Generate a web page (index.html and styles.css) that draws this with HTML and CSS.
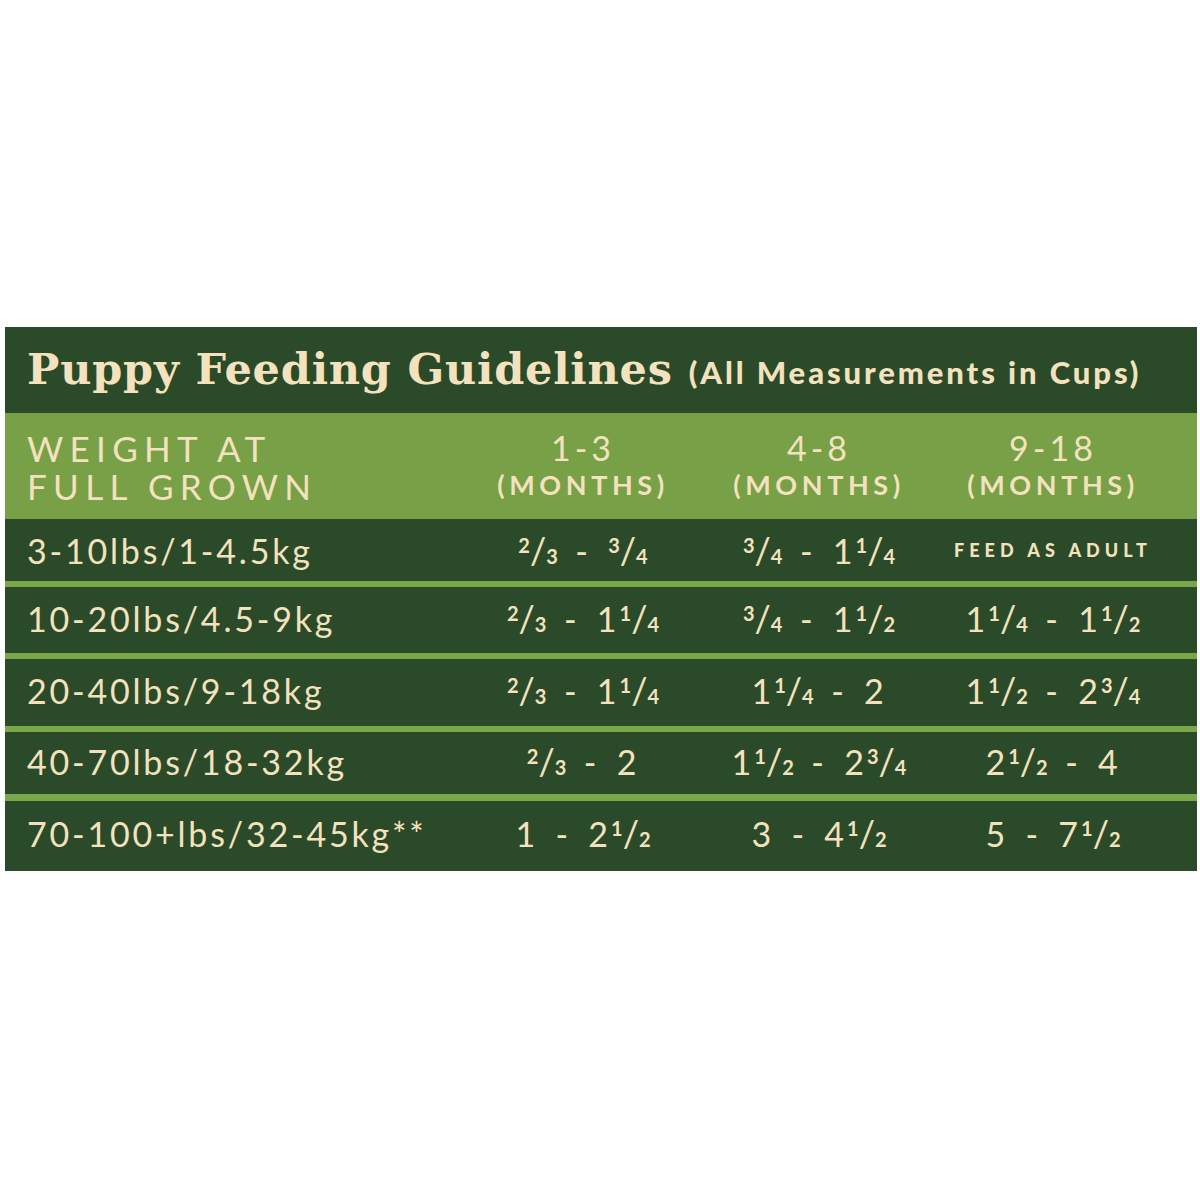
FILE: index.html
```html
<!DOCTYPE html>
<html>
<head>
<meta charset="utf-8">
<link rel="stylesheet" href="styles.css">
</head>
<body>
<div class="page">
  <div class="card">
    <div class="title">
      <span class="title-main">Puppy Feeding Guidelines</span>
      <span class="title-sub">(All Measurements in Cups)</span>
    </div>
    <div class="row head">
      <div class="c1">WEIGHT AT<br>FULL GROWN</div>
      <div class="cc"><span class="range">1-3</span><span class="months">(MONTHS)</span></div>
      <div class="cc"><span class="range">4-8</span><span class="months">(MONTHS)</span></div>
      <div class="cc"><span class="range">9-18</span><span class="months">(MONTHS)</span></div>
    </div>
    <div class="row data r1">
      <div class="c1">3-10lbs/1-4.5kg</div>
      <div class="cc"><span class="fr"><span class="n">2</span><span class="s">/</span><span class="d">3</span></span> - <span class="fr"><span class="n">3</span><span class="s">/</span><span class="d">4</span></span></div>
      <div class="cc"><span class="fr"><span class="n">3</span><span class="s">/</span><span class="d">4</span></span> - <span class="w">1</span><span class="fr"><span class="n">1</span><span class="s">/</span><span class="d">4</span></span></div>
      <div class="cc adult">FEED AS ADULT</div>
    </div>
    <div class="row data r2">
      <div class="c1">10-20lbs/4.5-9kg</div>
      <div class="cc"><span class="fr"><span class="n">2</span><span class="s">/</span><span class="d">3</span></span> - <span class="w">1</span><span class="fr"><span class="n">1</span><span class="s">/</span><span class="d">4</span></span></div>
      <div class="cc"><span class="fr"><span class="n">3</span><span class="s">/</span><span class="d">4</span></span> - <span class="w">1</span><span class="fr"><span class="n">1</span><span class="s">/</span><span class="d">2</span></span></div>
      <div class="cc"><span class="w">1</span><span class="fr"><span class="n">1</span><span class="s">/</span><span class="d">4</span></span> - <span class="w">1</span><span class="fr"><span class="n">1</span><span class="s">/</span><span class="d">2</span></span></div>
    </div>
    <div class="row data r3">
      <div class="c1">20-40lbs/9-18kg</div>
      <div class="cc"><span class="fr"><span class="n">2</span><span class="s">/</span><span class="d">3</span></span> - <span class="w">1</span><span class="fr"><span class="n">1</span><span class="s">/</span><span class="d">4</span></span></div>
      <div class="cc"><span class="w">1</span><span class="fr"><span class="n">1</span><span class="s">/</span><span class="d">4</span></span> - 2</div>
      <div class="cc"><span class="w">1</span><span class="fr"><span class="n">1</span><span class="s">/</span><span class="d">2</span></span> - <span class="w">2</span><span class="fr"><span class="n">3</span><span class="s">/</span><span class="d">4</span></span></div>
    </div>
    <div class="row data r4">
      <div class="c1">40-70lbs/18-32kg</div>
      <div class="cc"><span class="fr"><span class="n">2</span><span class="s">/</span><span class="d">3</span></span> - 2</div>
      <div class="cc"><span class="w">1</span><span class="fr"><span class="n">1</span><span class="s">/</span><span class="d">2</span></span> - <span class="w">2</span><span class="fr"><span class="n">3</span><span class="s">/</span><span class="d">4</span></span></div>
      <div class="cc"><span class="w">2</span><span class="fr"><span class="n">1</span><span class="s">/</span><span class="d">2</span></span> - 4</div>
    </div>
    <div class="row data r5">
      <div class="c1">70-100+lbs/32-45kg**</div>
      <div class="cc">1 - <span class="w">2</span><span class="fr"><span class="n">1</span><span class="s">/</span><span class="d">2</span></span></div>
      <div class="cc">3 - <span class="w">4</span><span class="fr"><span class="n">1</span><span class="s">/</span><span class="d">2</span></span></div>
      <div class="cc">5 - <span class="w">7</span><span class="fr"><span class="n">1</span><span class="s">/</span><span class="d">2</span></span></div>
    </div>
  </div>
</div>
</body>
</html>
```
FILE: styles.css
```css
html, body {
  margin: 0;
  padding: 0;
  background: #ffffff;
}
.page {
  width: 1200px;
  height: 1200px;
  padding-top: 327px;
  box-sizing: border-box;
}
.card {
  margin-left: 5px;
  width: 1192px;
  background: #2b4a29;
  color: #f3e2bd;
  font-family: Lato, "Open Sans", sans-serif;
}
.title {
  height: 86px;
  box-sizing: border-box;
  padding: 17px 0 0 22px;
  display: flex;
  align-items: baseline;
  white-space: nowrap;
}
.title-main {
  font-family: "DejaVu Serif", "Liberation Serif", serif;
  font-weight: bold;
  font-size: 43px;
  letter-spacing: 0.8px;
}
.title-sub {
  margin-left: 16px;
  font-family: Lato, sans-serif;
  font-weight: 900;
  font-size: 31px;
  letter-spacing: 2.9px;
}
.row {
  display: grid;
  grid-template-columns: 460px 236px 236px 232px;
  align-items: center;
}
.row .c1 {
  padding-left: 22px;
}
.row .cc {
  text-align: center;
}
.head {
  background: #77a047;
  height: 106px;
  font-size: 35px;
  letter-spacing: 6.3px;
  line-height: 38px;
}
.head .c1 {
  padding-top: 2px;
}
.head .cc {
  display: flex;
  flex-direction: column;
  align-items: center;
}
.range {
  font-size: 34px;
  letter-spacing: 4px;
  line-height: 38px;
}
.months {
  font-weight: bold;
  font-size: 27px;
  letter-spacing: 4.6px;
  line-height: 36px;
}
.data {
  border-top: 6px solid #79a84a;
  box-sizing: border-box;
  font-size: 34px;
  letter-spacing: 2.8px;
  word-spacing: 6px;
  padding-bottom: 4px;
}
.data.r1 {
  height: 62px;
  border-top: 0;
  padding-bottom: 0;
}
.data.r2 { height: 72px; }
.data.r3 { height: 73px; }
.data.r4 { height: 68px; }
.data.r5 { height: 77px; border-top-width: 7px; padding-bottom: 6px; }
.w {
  letter-spacing: 0;
  margin-right: 3px;
}
.fr {
  letter-spacing: 0;
  white-space: nowrap;
}
.fr .n,
.fr .d {
  font-size: 20px;
  font-weight: bold;
}
.fr .n {
  vertical-align: 11px;
}
.fr .s {
  font-size: 36px;
  line-height: 1;
}
.adult {
  font-size: 18px;
  font-weight: 900;
  letter-spacing: 5px;
  word-spacing: 0;
}
```
